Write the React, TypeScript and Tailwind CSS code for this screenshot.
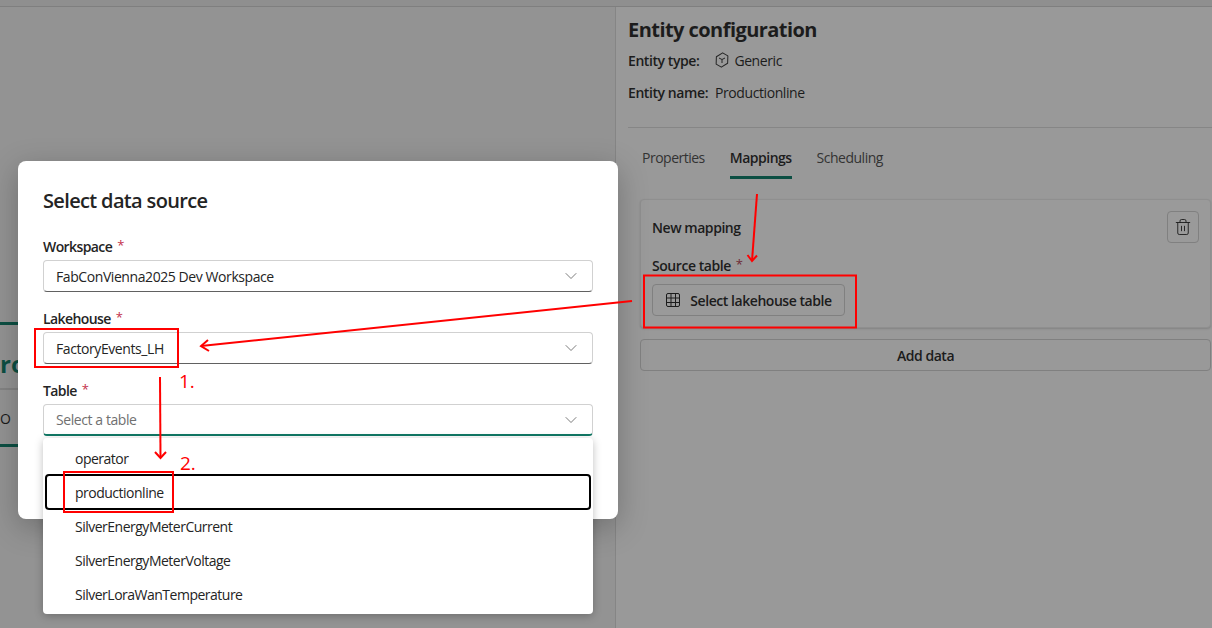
import { ChevronDown, Trash2 } from "lucide-react";

const font = "font-['Open_Sans','Noto_Sans',sans-serif]";

function Field({ label, value, active, muted }: { label: string; value: string; active?: boolean; muted?: boolean }) {
  return (
    <div className="mb-3">
      <div className="h-7 flex items-center text-[14px] font-semibold text-[#242424] tracking-[-0.6px]">
        {label} <span className="ml-[5px] text-[13px] font-normal text-[#c4314b]">*</span>
      </div>
      <div
        className={`h-8 flex items-center justify-between pl-3 pr-[11px] bg-white rounded border border-[#d1d1d1] ${
          active ? "border-b-2 border-b-[#117865]" : "border-b-[#616161]"
        }`}
      >
        <span className={`text-[14px] tracking-[-0.42px] ${muted ? "text-[#707070]" : "text-[#242424]"}`}>{value}</span>
        <ChevronDown className="w-[20px] h-[20px] text-[#616161]" strokeWidth={1} />
      </div>
    </div>
  );
}

function CubeIcon() {
  return (
    <svg width="16" height="16" viewBox="0 0 16 16" fill="none" stroke="#242424" strokeWidth="1">
      <path d="M5 1.500h6l3.500 6.500-3.500 6.500H5L1.500 8z" strokeLinejoin="round" transform="rotate(30 8 8)" />
      <path d="M5 6l3 1.500L11 6M8 7.500V11" />
    </svg>
  );
}

function GridIcon() {
  return (
    <svg width="16" height="16" viewBox="0 0 16 16" fill="none" stroke="#1c1c1c" strokeWidth="1">
      <rect x="1.500" y="1.500" width="13" height="13" rx="1.500" />
      <path d="M1.500 6h13M1.500 10.500h13M6 1.500v13M10.500 1.500v13" />
    </svg>
  );
}

function Annotations() {
  return (
    <svg className="absolute inset-0 pointer-events-none" width="1212" height="628" fill="none" stroke="#ff0000">
      <path d="M757 194 752 261" strokeWidth="2" />
      <path d="M747.500 255 752 261 757 255.500" strokeWidth="2" />
      <path d="M632 301 201 346" strokeWidth="2" />
      <path d="M208 340 201 346 209 351" strokeWidth="2" />
      <path d="M160 377 160.500 458" strokeWidth="2" />
      <path d="M155 452 160.500 458 166 452" strokeWidth="2" />
      <rect x="644" y="275.500" width="212" height="52" strokeWidth="2" />
      <rect x="35" y="329" width="143" height="38" strokeWidth="2" />
      <rect x="64" y="472" width="109" height="40" strokeWidth="2" />
    </svg>
  );
}

export default function App() {
  return (
    <div className={`relative w-[1212px] h-[628px] overflow-hidden bg-[#949494] flex flex-col ${font}`}>
      <div className="h-[7px] shrink-0 bg-[#8f8f8f] border-b border-[#7f7f7f]" />
      <div className="flex flex-1 min-h-0">
        {/* page behind the dialog */}
        <div className="w-[615px] shrink-0 bg-[#939393] pt-[315px]">
          <div className="w-[40px] overflow-hidden">
            <div className="h-[3px] bg-[#0c4f43]" />
            <div className="h-[65px] flex items-center pt-[15px] border-b-2 border-[#838383] text-[24px] font-bold text-[#0c4f43] whitespace-nowrap">
              ro
            </div>
            <div className="h-[57px] flex items-center pt-[2px] text-[14px] text-[#1a1a1a] border-b-[3px] border-[#0c4f43] whitespace-nowrap gap-2">
              <span>O</span>
              <span>I</span>
            </div>
          </div>
        </div>

        {/* entity panel */}
        <div className="flex-1 bg-[#999999] border-l border-[#858585] pl-3 text-[#1c1c1c]">
          <h2 className="mt-[9px] h-7 flex items-center text-[20px] font-bold tracking-[-0.55px]">Entity configuration</h2>
          <div className="mt-[4px] h-6 flex items-center text-[14px] tracking-[-0.42px]">
            <span className="font-semibold">Entity type:</span>
            <span className="ml-[15px] mr-[4px]"><CubeIcon /></span>
            <span>Generic</span>
          </div>
          <div className="mt-2 h-6 flex items-center text-[14px] tracking-[-0.42px]">
            <span className="font-semibold">Entity name:</span>
            <span className="ml-[7px]">Productionline</span>
          </div>
          <div className="mt-[23px] border-t border-[#868686]" />

          <div className="mt-[13px] flex pl-[14px] gap-[25px] text-[14px] tracking-[-0.5px]">
            <div className="h-9 flex items-center text-[#333333] pb-[3px]">Properties</div>
            <div className="h-[38px] font-semibold border-b-[3px] border-[#0c4f43] flex items-center pb-[2px]">Mappings</div>
            <div className="h-9 flex items-center text-[#333333] pb-[3px]">Scheduling</div>
          </div>

          <div className="mt-[20px] ml-3 mr-[1px]">
            <div className="h-[129px] rounded border border-[#8f8f8f] bg-[#9a9a9a] px-[11px] shadow-[0_1px_2px_rgba(0,0,0,0.15)]">
              <div className="flex justify-between pt-[11px]">
                <div className="mt-[4px] h-6 flex items-center text-[14px] font-semibold tracking-[-0.45px]">New mapping</div>
                <div className="w-8 h-8 rounded border border-[#808080] flex items-center justify-center">
                  <Trash2 className="w-[18px] h-[18px]" strokeWidth={1.2} />
                </div>
              </div>
              <div className="mt-[10px] h-6 flex items-center text-[14px] font-semibold tracking-[-0.45px]">
                Source table <span className="ml-[5px] text-[13px] font-normal text-[#6e2a35]">*</span>
              </div>
              <button className="mt-[7px] h-8 w-[193px] flex items-center justify-center gap-[9px] rounded border border-[#808080] text-[14px] font-semibold tracking-[-0.45px]">
                <GridIcon />
                Select lakehouse table
              </button>
            </div>
            <button className="mt-[11px] w-full h-8 rounded border border-[#808080] text-[14px] font-semibold tracking-[-0.45px]">
              Add data
            </button>
          </div>
        </div>
      </div>

      {/* dialog */}
      <div className="absolute left-[18px] top-[161px] w-[600px] h-[358px] bg-white rounded-lg shadow-[0_8px_30px_rgba(0,0,0,0.25)] px-[25px] pt-[26px]">
        <h1 className="h-7 flex items-center text-[20px] font-semibold text-[#242424] tracking-[-0.65px]">Select data source</h1>
        <div className="mt-[17px]">
          <Field label="Workspace" value="FabConVienna2025 Dev Workspace" />
          <Field label="Lakehouse" value="FactoryEvents_LH" />
          <Field label="Table" value="Select a table" active muted />
        </div>
      </div>

      {/* dropdown */}
      <div className="absolute left-[43px] top-[438px] w-[550px] h-[176px] bg-white rounded shadow-[0_2px_8px_rgba(0,0,0,0.25)] pt-[3px] px-[2px] text-[14px] text-[#242424] tracking-[-0.5px]">
        {["operator", "productionline", "SilverEnergyMeterCurrent", "SilverEnergyMeterVoltage", "SilverLoraWanTemperature"].map((item) => (
          <div
            key={item}
            className={`flex items-center ${
              item === "productionline" ? "h-[36px] -my-[1px] pl-[28px] rounded border-2 border-black" : "h-[34px] pl-[30px]"
            }`}
          >
            {item}
          </div>
        ))}
      </div>

      <Annotations />
      <span className="absolute left-[179px] top-[367px] text-[19px] text-[#ff0000]">1.</span>
      <span className="absolute left-[180px] top-[449px] text-[19px] text-[#ff0000]">2.</span>
    </div>
  );
}
